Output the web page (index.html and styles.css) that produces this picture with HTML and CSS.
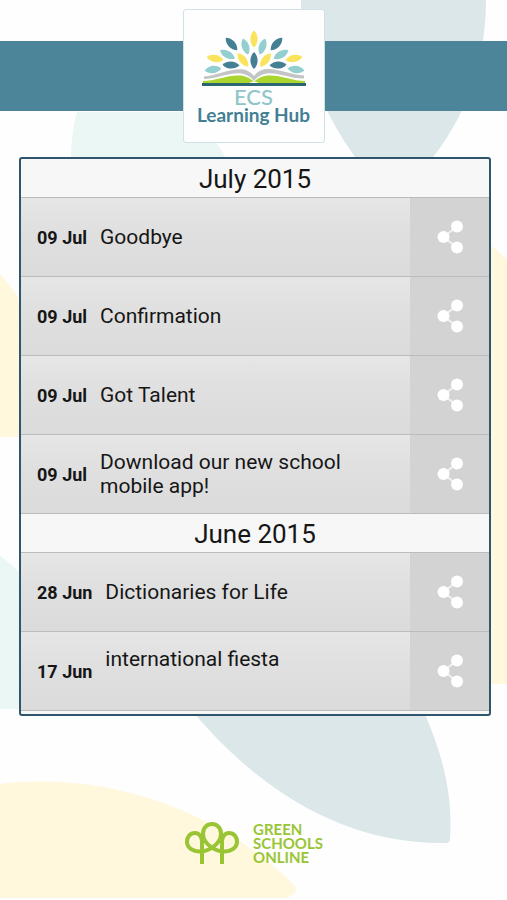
FILE: index.html
```html
<!DOCTYPE html>
<html lang="en">
<head>
<meta charset="utf-8">
<meta name="viewport" content="width=device-width, initial-scale=1">
<title>ECS Learning Hub</title>
<link rel="stylesheet" href="styles.css">
</head>
<body>
<div class="app">
  <svg class="backdrop" viewBox="0 0 507 900" preserveAspectRatio="xMidYMin slice" aria-hidden="true">
    <path fill="#dce7e9" d="M301 0H486C486 50 472 108 433 157H355C320 108 300 55 301 0Z"/>
    <path fill="#eaf7f4" d="M77 112H183L216 142L227 160H71C71 145 73 125 77 112Z"/>
    <path fill="#fff8dd" d="M0 274C9 284 15 292 22 303V437H0Z"/>
    <path fill="#fff8dd" d="M488 244C496 249 502 254 507 260V684H488Z"/>
    <path fill="#eaf7f4" d="M0 556C7 561 13 566 20 573V709H0Z"/>
    <path fill="#dce7e9" d="M193 712H424C443 755 453 796 450 839Q450 843 446 843C350 845 264 796 193 712Z"/>
    <path fill="#fff8dd" d="M0 784C110 771 220 812 293 884Q301 892 287 898H0Z"/>
  </svg>

  <header class="banner">
    <div class="brand">
      <svg class="brand-mark" viewBox="0 0 104 58" aria-hidden="true">
        <defs><path id="leaf" d="M0-8.500C4.800-4 4.800 4 0 8.500C-4.800 4-4.800-4 0-8.500Z"/></defs>
        <g fill="#fae35d">
          <use href="#leaf" transform="translate(52 10)"/>
          <use href="#leaf" transform="translate(41 31) rotate(-38)"/>
          <use href="#leaf" transform="translate(63.500 31) rotate(38)"/>
          <use href="#leaf" transform="translate(13 29.500) rotate(-80)"/>
          <use href="#leaf" transform="translate(92 29.500) rotate(80)"/>
        </g>
        <g fill="#92cfce">
          <use href="#leaf" transform="translate(43.500 17.500) rotate(-18)"/>
          <use href="#leaf" transform="translate(60.500 17.500) rotate(18)"/>
          <use href="#leaf" transform="translate(25.500 25.500) rotate(-60)"/>
          <use href="#leaf" transform="translate(79 25.500) rotate(60)"/>
          <use href="#leaf" transform="translate(11 40.500) rotate(-97)"/>
          <use href="#leaf" transform="translate(94 40.500) rotate(97)"/>
        </g>
        <g fill="#457f94">
          <use href="#leaf" transform="translate(29.500 15) rotate(-43)"/>
          <use href="#leaf" transform="translate(74.500 15) rotate(43)"/>
          <use href="#leaf" transform="translate(52 31.500)"/>
          <use href="#leaf" transform="translate(29 36) rotate(-88)"/>
          <use href="#leaf" transform="translate(76 36) rotate(88)"/>
        </g>
        <path fill="#c3c4c5" d="M2 47.500C20 46 41 32 52 47C63 32 84 46 102 46.500V49.500C82 50 65 36 52 52C39 36 20 50 2 50Z"/>
        <path fill="#aad52f" d="M1 52C18 52 39 39 52 53C65 39 86 52 103 52V54.500H1Z"/>
        <path fill="#2c6673" d="M0 54H104V57H0Z"/>
        <path fill="#fff" d="M47 54Q52 51 57 54Z"/>
      </svg>
      <h1 class="brand-name"><span class="brand-short">ECS</span><span class="brand-long">Learning Hub</span></h1>
    </div>
  </header>

  <svg class="symbols" aria-hidden="true">
    <symbol id="share" viewBox="0 0 26 34">
      <path d="M20 6.500L6.500 17L20 27.500" fill="none" stroke="#f2f2f2" stroke-width="2"/>
      <g fill="#fff"><circle cx="20" cy="6.500" r="6"/><circle cx="6.500" cy="17" r="6"/><circle cx="20" cy="27.500" r="6"/></g>
    </symbol>
  </svg>

  <main class="panel">
    <section>
      <h2 class="month">July 2015</h2>
      <ul class="items">
        <li class="item"><a class="entry" href="#goodbye"><time class="date">09 Jul</time><span class="title">Goodbye</span></a><button class="share" type="button" aria-label="Share"><svg class="share-icon"><use href="#share"/></svg></button></li>
        <li class="item"><a class="entry" href="#confirmation"><time class="date">09 Jul</time><span class="title">Confirmation</span></a><button class="share" type="button" aria-label="Share"><svg class="share-icon"><use href="#share"/></svg></button></li>
        <li class="item"><a class="entry" href="#talent"><time class="date">09 Jul</time><span class="title">Got Talent</span></a><button class="share" type="button" aria-label="Share"><svg class="share-icon"><use href="#share"/></svg></button></li>
        <li class="item"><a class="entry" href="#app"><time class="date">09 Jul</time><span class="title">Download our new school mobile app!</span></a><button class="share" type="button" aria-label="Share"><svg class="share-icon"><use href="#share"/></svg></button></li>
      </ul>
    </section>
    <section>
      <h2 class="month">June 2015</h2>
      <ul class="items">
        <li class="item"><a class="entry" href="#dictionaries"><time class="date">28 Jun</time><span class="title">Dictionaries for Life</span></a><button class="share" type="button" aria-label="Share"><svg class="share-icon"><use href="#share"/></svg></button></li>
        <li class="item"><a class="entry" href="#fiesta"><time class="date">17 Jun</time><span class="title title-tall">international fiesta</span></a><button class="share" type="button" aria-label="Share"><svg class="share-icon"><use href="#share"/></svg></button></li>
      </ul>
    </section>
  </main>

  <footer class="footer">
    <svg class="trees" viewBox="0 0 56 44" fill="none" stroke="#99c535" stroke-width="4" aria-hidden="true">
      <path d="M18 43V22C18 17 16 12 11 12C6 12 3 16 3 20.500C3 27 9 30.500 16 30.500C23 30.500 37 24 37 12.500C37 7 33 3 28 3C23 3 19 7 19 12.500C19 24 33 30.500 40 30.500C47 30.500 53 27 53 20.500C53 16 50 12 45 12C40 12 38 17 38 22V43"/>
    </svg>
    <p class="footer-name">GREEN<br>SCHOOLS<br>ONLINE</p>
  </footer>
</div>
</body>
</html>
```
FILE: styles.css
```css
* { box-sizing: border-box; }

body {
  margin: 0;
  background: #fefefe;
  color: #161616;
  font-family: Roboto, "Liberation Sans", sans-serif;
}

.app {
  position: relative;
  min-height: 100vh;
  overflow: hidden;
  isolation: isolate;
}

.backdrop {
  position: absolute;
  inset: 0;
  z-index: -1;
  width: 100%;
  height: 100%;
}

.symbols { position: absolute; width: 0; height: 0; }

.banner {
  display: flex;
  justify-content: center;
  padding: 9px 0 14px;
  background: linear-gradient(transparent 41px, #4c8599 41px, #4c8599 111px, transparent 111px);
}

.brand {
  display: flex;
  flex-direction: column;
  align-items: center;
  width: 142px;
  height: 134px;
  padding-top: 19px;
  border: 1px solid #cfe3e7;
  border-radius: 3px;
  background: #fefefe;
}

.brand-mark { width: 104px; height: 58px; }

.brand-name {
  display: flex;
  flex-direction: column;
  align-items: center;
  margin: 0;
  font-family: Lato, sans-serif;
  white-space: nowrap;
}

.brand-short { font-size: 22px; line-height: 20px; font-weight: 500; color: #8fc5c8; }
.brand-long { font-size: 19px; line-height: 16px; font-weight: 700; color: #437f94; }

.panel {
  margin: 0 16px 0 19px;
  padding-bottom: 3px;
  border: 2px solid #2f566c;
  border-radius: 3px;
  background: #f7f7f7;
}

.month {
  margin: 0;
  height: 39px;
  border-bottom: 1px solid #bcbcbc;
  font-size: 26px;
  line-height: 40px;
  font-weight: 400;
  text-align: center;
}

.items { margin: 0; padding: 0; list-style: none; }

.item {
  display: flex;
  min-height: 79px;
  border-bottom: 1px solid #bcbcbc;
}

.entry {
  flex: 1;
  display: flex;
  align-items: center;
  gap: 13px;
  padding: 0 48px 0 16px;
  background: linear-gradient(#e6e6e6, #e0e0e0 40%, #dbdbdb);
  color: inherit;
  text-decoration: none;
}

.date { font-size: 18px; font-weight: 700; white-space: nowrap; }
.title { font-size: 21px; line-height: 24px; }
.title-tall { min-height: 48px; }

.share {
  display: grid;
  place-items: center;
  width: 79px;
  padding: 0;
  border: 0;
  background: #d3d3d3;
}

.share-icon { width: 26px; height: 34px; }

.footer {
  display: flex;
  justify-content: center;
  align-items: center;
  gap: 13px;
  padding: 105px 0 32px;
}

.trees { width: 56px; height: 44px; }

.footer-name {
  margin: 0;
  font-family: Lato, sans-serif;
  font-size: 15px;
  line-height: 14px;
  font-weight: 700;
  color: #99c535;
}
```
